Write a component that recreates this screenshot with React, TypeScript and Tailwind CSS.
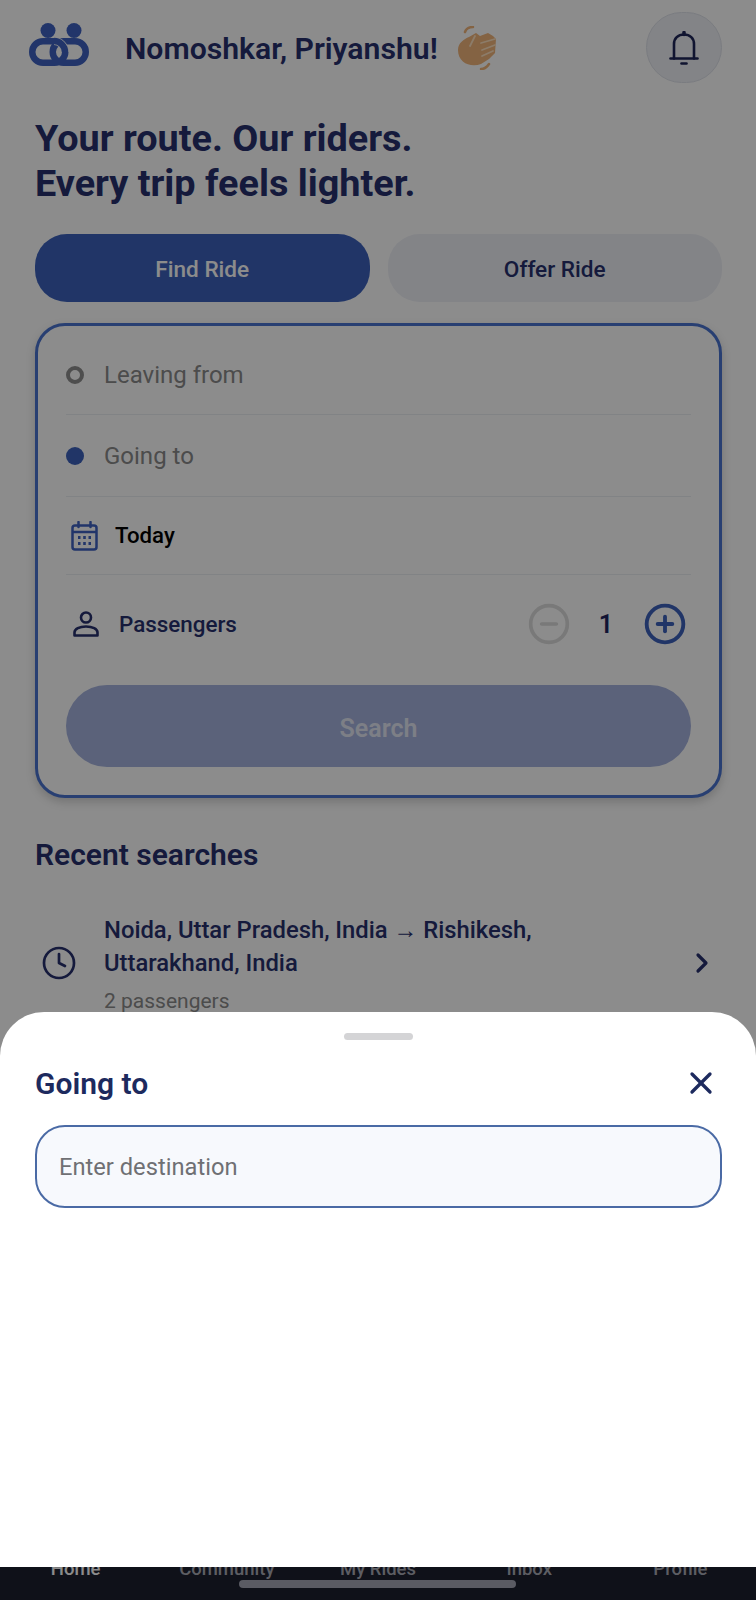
import React from 'react';
import { ChevronRight, CircleMinus, CirclePlus, Clock, X } from 'lucide-react';

const Logo = () => (
  <svg width="60" height="43" viewBox="0 0 60 43" fill="none">
    <circle cx="19" cy="7.5" r="7.5" fill="#3e62c1" />
    <circle cx="45" cy="7.5" r="7.5" fill="#3e62c1" />
    <rect x="3.25" y="18.25" width="33" height="21.5" rx="10.75" stroke="#3e62c1" strokeWidth="6.5" />
    <rect x="23.75" y="18.25" width="33" height="21.5" rx="10.75" stroke="#3e62c1" strokeWidth="6.5" />
    {/* left link passes over the right one at the top */}
    <path d="M25 18C31 18 36 23 36 29" stroke="white" strokeWidth="8" />
    <path d="M25 18C31 18 36 23 36 29" stroke="#3e62c1" strokeWidth="6.5" />
  </svg>
);

const WaveHand = () => (
  <svg width="41" height="44" viewBox="0 0 41 44" fill="none">
    <path d="M2 24C2 17 8 13 13 11L20 7L24 10L32 7L37 10L40 13L39 27L33 33L25 38C15 42 2 37 2 24Z" fill="#f0b47a" />
    <path d="M19 10L14 20M25 17L39 13M26 24L39 19M26 30L37 25" stroke="#ffe2c0" strokeWidth="1.8" strokeLinecap="round" />
    <path d="M9 6C10 3 13 1 17 1M25 43C28 43 31 41 33 38" stroke="#f0b47a" strokeWidth="2.5" strokeLinecap="round" />
  </svg>
);

const BellIcon = () => (
  <svg width="30" height="34" viewBox="0 0 30 34" fill="none" stroke="#1e2558" strokeWidth="2.6" strokeLinecap="round" strokeLinejoin="round">
    <path d="M15 1.5V3.5" strokeWidth="3.5" />
    <path d="M5 27.5V13C5 7.5 9 3.5 15 3.5C21 3.5 25 7.5 25 13V27.5" />
    <path d="M1.5 27.5H28.5" />
    <path d="M12.5 32.5H17.5" />
  </svg>
);

const CalendarIcon = () => (
  <svg width="27" height="30" viewBox="0 0 27 30" fill="none" stroke="#3e62c1">
    <rect x="1.5" y="4.5" width="24" height="24" rx="2.5" strokeWidth="2.5" />
    <path d="M1.5 11H25.5" strokeWidth="2.5" />
    <path d="M7.5 1V6M19.5 1V6" strokeWidth="2.5" strokeLinecap="round" />
    <path d="M7 16.5H9.5M12.2 16.5H14.8M17.5 16.5H20M7 22.5H9.5M12.2 22.5H14.8M17.5 22.5H20" strokeWidth="3" />
  </svg>
);

const UserIcon = () => (
  <svg width="26" height="26" viewBox="0 0 26 26" fill="none" stroke="#27306e" strokeWidth="2.6">
    <circle cx="13" cy="6.5" r="5" />
    <path d="M1.5 24.5V21.5C1.5 18 6.5 15.5 13 15.5C19.5 15.5 24.5 18 24.5 21.5V24.5H1.5Z" strokeLinejoin="round" />
  </svg>
);

const tabs = ['Home', 'Community', 'My Rides', 'Inbox', 'Profile'];

const App: React.FC = () => {
  return (
    <div className="relative flex h-[1600px] w-[756px] flex-col overflow-hidden bg-white font-['Roboto',sans-serif]">
      <main className="flex-1 overflow-hidden pl-[35px] pr-[34px]">
        {/* Header */}
        <header className="mt-[12px] flex h-[71px] items-center">
          <div className="-ml-[6px] mt-[-6px]">
            <Logo />
          </div>
          <h2 className="ml-[36px] mt-[2px] text-[30.2px] font-semibold text-[#27306e]">Nomoshkar, Priyanshu!</h2>
          <div className="ml-[18px] mt-[1px]">
            <WaveHand />
          </div>
          <button className="ml-auto flex h-[71px] w-[76px] items-center justify-center rounded-full border border-[#dfe2ea] bg-[#eef0f6]">
            <BellIcon />
          </button>
        </header>

        <h1 className="mt-[33px] text-[37.8px] font-bold leading-[45px] text-[#27306e]">
          Your route. Our riders.
          <br />
          Every trip feels lighter.
        </h1>

        {/* Find / Offer toggle */}
        <div className="mt-[28px] flex gap-[18px]">
          <button className="h-[68px] flex-1 rounded-[32px] bg-[#3c62bc] pt-[3px] text-[22.6px] font-medium text-white">Find Ride</button>
          <button className="h-[68px] flex-1 rounded-[32px] bg-[#eef0f6] pt-[3px] text-[22.6px] font-medium text-[#27306e]">Offer Ride</button>
        </div>

        {/* Search card */}
        <section className="mt-[21px] rounded-[30px] border-[3px] border-[#4a74d0] bg-white px-[28px] pb-[28px] pt-[9px] shadow-[0_4px_10px_rgba(0,0,0,0.18)]">
          <div className="flex h-[80px] items-center gap-[20px] border-b border-[#eceef2]">
            <span className="h-[18px] w-[18px] rounded-full border-[4px] border-[#8f8f8f]" />
            <span className="text-[24px] text-[#8a8a8a]">Leaving from</span>
          </div>
          <div className="flex h-[82px] items-center gap-[20px] border-b border-[#eceef2]">
            <span className="h-[18px] w-[18px] rounded-full bg-[#3c62bc]" />
            <span className="text-[24px] text-[#8a8a8a]">Going to</span>
          </div>
          <div className="flex h-[78px] items-center gap-[17px] border-b border-[#eceef2] pl-[5px] pt-[1px]">
            <CalendarIcon />
            <span className="text-[22.2px] font-medium text-black">Today</span>
          </div>
          <div className="flex h-[98px] items-center pl-[7px] pr-[4px]">
            <UserIcon />
            <span className="ml-[20px] mt-[2px] text-[22.4px] font-medium text-[#27306e]">Passengers</span>
            <CircleMinus size={44} strokeWidth={2} color="#dcdcdc" className="ml-auto" />
            <span className="ml-[23px] mt-[2px] w-[24px] text-center text-[25px] font-semibold text-[#1f2660]">1</span>
            <CirclePlus size={44} strokeWidth={2.1} color="#3c62bc" className="ml-[25px]" />
          </div>
          <button className="mt-[12px] h-[82px] w-full rounded-[41px] bg-[#a6b3de] pt-[5px] text-[25px] font-semibold text-white/70">Search</button>
        </section>

        {/* Recent searches */}
        <h3 className="mt-[39px] text-[30px] font-semibold leading-[36px] text-[#27306e]">Recent searches</h3>
        <div className="mt-[41px] flex items-center">
          <Clock size={36} strokeWidth={1.8} color="#27306e" className="ml-[6px] shrink-0" />
          <div className="ml-[27px] w-[450px]">
            <p className="text-[23.8px] font-medium leading-[33px] text-[#27306e]">Noida, Uttar Pradesh, India → Rishikesh, Uttarakhand, India</p>
            <p className="mt-[10px] text-[21px] leading-[22px] text-[#8a8a8a]">2 passengers</p>
          </div>
          <ChevronRight size={32} strokeWidth={2.4} color="#27306e" className="ml-auto mr-[4px] shrink-0" />
        </div>
      </main>

      {/* Bottom tabs, mostly hidden by the sheet */}
      <nav className="grid h-[44px] shrink-0 grid-cols-5 bg-[#1d1f2f] pt-[2px] text-center text-[18.5px] font-medium leading-[22px] text-[#a9abb5]">
        {tabs.map((t, i) => (
          <span key={t} className={i === 0 ? 'text-white' : ''}>{t}</span>
        ))}
      </nav>

      {/* Scrim */}
      <div className="absolute inset-0 bg-black/45" />
      <div className="absolute bottom-[12px] left-[239px] h-[8px] w-[277px] rounded-full bg-[#5a5b63]" />

      {/* Going to sheet */}
      <div className="absolute inset-x-0 bottom-[33px] top-[1012px] rounded-t-[44px] bg-white pl-[35px] pr-[34px]">
        <div className="mx-auto mt-[21px] h-[7px] w-[69px] rounded-full bg-[#d4d4d6]" />
        <div className="mt-[20px] flex h-[46px] items-center justify-between">
          <h3 className="text-[30px] font-semibold text-[#1d2a5e]">Going to</h3>
          <X size={36} strokeWidth={2.2} color="#1d2a5e" className="mr-[3px]" />
        </div>
        <div className="mt-[19px] flex h-[83px] items-center rounded-[30px] border-[2.5px] border-[#4a6aa5] bg-[#f7f9fd] pl-[22px] pr-[21px] pt-[2px]">
          <input readOnly placeholder="Enter destination" className="w-full bg-transparent text-[23.7px] text-[#555] outline-none placeholder:text-[#6f7074]" />
        </div>
      </div>
    </div>
  );
};

export default App;
